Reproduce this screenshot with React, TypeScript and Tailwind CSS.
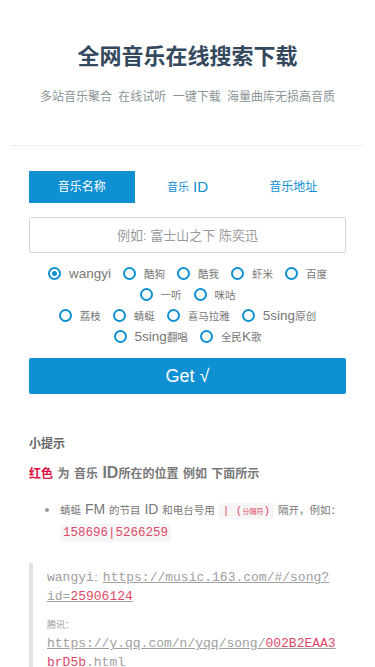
import React from "react";

const SANS = "font-['Liberation_Sans','Noto_Sans_CJK_SC',sans-serif]";
const MONO = "font-['Liberation_Mono','Noto_Sans_CJK_SC',monospace]";

const mix = (t: string, c: string) =>
  t.split(/([\u3000-\u9fff\uff00-\uffef]+)/).map((p, i) =>
    i % 2 ? (
      <span key={i} className={c}>
        {p}
      </span>
    ) : (
      <React.Fragment key={i}>{p}</React.Fragment>
    )
  );

const group1 = ["wangyi", "酷狗", "酷我", "虾米", "百度", "一听", "咪咕"];
const group2 = ["荔枝", "蜻蜓", "喜马拉雅", "5sing原创", "5sing翻唱", "全民K歌"];

function Radio({ label, checked }: { label: string; checked?: boolean }) {
  return (
    <label className="mx-[6px] inline-flex h-[21px] items-center">
      <span className="flex h-[13px] w-[13px] items-center justify-center rounded-full border-2 border-[#0e90d2]">
        {checked && <span className="h-[5px] w-[5px] rounded-full bg-[#0e90d2]" />}
      </span>
      <span className="ml-[8px] text-[13.5px] leading-none text-[#777]">{mix(label, "text-[10.5px] leading-none")}</span>
    </label>
  );
}

export default function App() {
  return (
    <div className={`${SANS} min-h-[667px] bg-white text-[#666]`}>
      <header className="pt-[44px] text-center">
        <h1 className="text-[22px] font-bold leading-[26px] text-[#34495e]">全网音乐在线搜索下载</h1>
        <p className="mt-[17px] text-[12px] leading-[20px] text-[#8a9595] [word-spacing:3px]">
          多站音乐聚合 在线试听 一键下载 海量曲库无损高音质
        </p>
      </header>
      <div className="mx-[10px] mt-[38px] border-t border-[#eeeeee]" />
      <main className="px-[29px] pt-[25px]">
        <div className="grid h-[32px] grid-cols-3">
          <div className="flex items-center justify-center bg-[#0e90d2] text-[12px] text-white">音乐名称</div>
          <div className="flex items-center justify-center text-[15px] text-[#0e90d2]">
            <span className="text-[11px]">音乐</span>&nbsp;ID
          </div>
          <div className="flex items-center justify-center text-[12px] text-[#0e90d2]">音乐地址</div>
        </div>
        <input
          className="mt-[14px] block h-[36px] w-full rounded-[2px] border border-[#d6d6d6] text-center text-[13px] outline-none placeholder:text-[#9a9a9a]"
          placeholder="例如: 富士山之下 陈奕迅"
        />
        <div className="mt-[10px]">
          <div className="flex flex-wrap justify-center">
            {group1.map((l, i) => (
              <Radio key={l} label={l} checked={i === 0} />
            ))}
          </div>
          <div className="flex flex-wrap justify-center">
            {group2.map((l) => (
              <Radio key={l} label={l} />
            ))}
          </div>
        </div>
        <button className="mt-[11px] h-[36px] w-full rounded-[2px] bg-[#0e90d2] text-[18px] text-white">Get √</button>

        <section>
          <h3 className="mt-[37px] text-[16px] font-semibold leading-[24px] text-[#666]">
            <span className="text-[12px] leading-none">小提示</span>
          </h3>
          <p className="mt-[6px] text-[16px] font-bold leading-[24px] text-[#777]">
            <span className="text-[12px] leading-none text-[#dd1144]">红色</span>{" "}
            {mix("为 音乐 ID所在的位置 例如 下面所示", "text-[12px] leading-none")}
          </p>
          <ul className="mt-[13px] list-disc pl-[31px] text-[14px] leading-[22px] text-[#777] marker:text-[#999]">
            <li>
              {mix("蜻蜓 FM 的节目 ID 和电台号用", "text-[10.5px] leading-none")}{" "}
              <code className={`${MONO} rounded-[2px] bg-[#f6f6f6] px-[4px] py-[2px] text-[11px] leading-none text-[#dd4a68]`}>
                | (<span className="text-[7px] leading-none">分隔符</span>)
              </code>{" "}
              {mix("隔开，例如：", "text-[10.5px] leading-none")}{" "}
              <code className={`${MONO} rounded-[2px] bg-[#f6f6f6] px-[3px] py-[2px] text-[12.5px] leading-none text-[#dd4a68]`}>
                158696|5266259
              </code>
            </li>
          </ul>
          <blockquote
            className={`${MONO} mt-[21px] break-words border-l-4 border-[#e3e3e3] pb-[4px] pl-[14px] pr-[6px] pt-[5px] text-[13px] leading-[19px] text-[#a0a0a0]`}
          >
            <p>
              wangyi<span className="text-[9px] leading-none">：</span>
              <a className="underline">
                https://music.163.com/#/song?id=<span className="text-[#dd4a68]">25906124</span>
              </a>
            </p>
            <p className="mt-[9px]">
              <span className="text-[9px] leading-none">腾讯：</span>
              <a className="underline">
                https://y.qq.com/n/yqq/song/<span className="text-[#dd4a68]">002B2EAA3brD5b</span>.html
              </a>
            </p>
          </blockquote>
        </section>
      </main>
    </div>
  );
}
